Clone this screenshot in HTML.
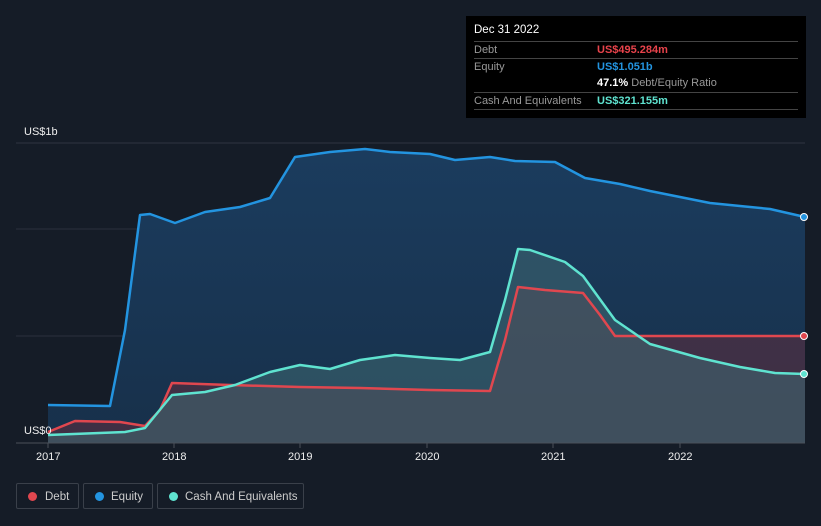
<!DOCTYPE html><html><head><style>
body{margin:0;width:821px;height:526px;background:#151c27;font-family:"Liberation Sans",sans-serif;overflow:hidden;position:relative}
.tt{position:absolute;left:466px;top:16px;width:340px;height:102px;background:#000;color:#fff;font-size:11px}
.row{position:absolute;left:8px;width:324px;border-top:1px solid #444;height:17px;line-height:17px}
.l{color:#999;position:absolute;left:0}.v{position:absolute;left:123px;font-weight:bold}
.lg{position:absolute;top:483px;height:26px;border:1px solid #3a404a;border-radius:2px;color:#ccc;font-size:11.5px;line-height:26px;box-sizing:border-box}
.lg i{position:absolute;left:11px;top:8px;width:9px;height:9px;border-radius:50%}
.ax{position:absolute;color:#eee;font-size:11px}
</style></head><body>
<svg width="821" height="526" style="position:absolute;left:0;top:0">
<defs><linearGradient id="g" x1="0" y1="0" x2="0" y2="1"><stop offset="0" stop-color="#1b3c5e"/><stop offset="1" stop-color="#17304a"/></linearGradient></defs>
<line x1="16" y1="143" x2="805" y2="143" stroke="#2e3540"/>
<line x1="16" y1="229" x2="805" y2="229" stroke="#2a313c"/>
<line x1="16" y1="336" x2="805" y2="336" stroke="#2a313c"/>
<polygon fill="url(#g)" points="48,443 48,405 110,406 125,330 140,215 150,214 175,223 205,212 240,207 270,198 295,157 330,152 365,149 390,152 430,154 455,160 490,157 515,161 555,162 585,178 620,184 650,191 680,197 710,203 740,206 770,209 805,217 805,443"/>
<polygon fill="#5a2f40" opacity="0.6" points="48,443 48,432 75,421 120,422 145,426 160,410 172,383 230,385 300,387 360,388 430,390 490,391 505,340 518,287 545,290 583,293 600,315 615,336 805,336 805,443"/>
<polygon fill="#3f6a72" opacity="0.55" points="48,443 48,435 125,432 145,428 172,395 205,392 235,385 270,372 300,365 330,369 360,360 395,355 430,358 460,360 490,352 505,300 518,249 530,250 565,262 583,276 615,320 650,344 700,358 740,367 775,373 805,374 805,443"/>
<polyline fill="none" stroke="#2394e0" stroke-width="2.5" stroke-linejoin="round" points="48,405 110,406 125,330 140,215 150,214 175,223 205,212 240,207 270,198 295,157 330,152 365,149 390,152 430,154 455,160 490,157 515,161 555,162 585,178 620,184 650,191 680,197 710,203 740,206 770,209 805,217"/>
<polyline fill="none" stroke="#e0474f" stroke-width="2.5" stroke-linejoin="round" points="48,432 75,421 120,422 145,426 160,410 172,383 230,385 300,387 360,388 430,390 490,391 505,340 518,287 545,290 583,293 600,315 615,336 805,336"/>
<polyline fill="none" stroke="#5fe3d0" stroke-width="2.5" stroke-linejoin="round" points="48,435 125,432 145,428 172,395 205,392 235,385 270,372 300,365 330,369 360,360 395,355 430,358 460,360 490,352 505,300 518,249 530,250 565,262 583,276 615,320 650,344 700,358 740,367 775,373 805,374"/>
<circle cx="804" cy="217" r="3.5" fill="#2394e0" stroke="#fff"/>
<circle cx="804" cy="336" r="3.5" fill="#e0474f" stroke="#fff"/>
<circle cx="804" cy="374" r="3.5" fill="#5fe3d0" stroke="#fff"/>
<line x1="16" y1="443" x2="805" y2="443" stroke="#4a505a"/>
<g stroke="#4a505a"><line x1="48" y1="443" x2="48" y2="448"/><line x1="174" y1="443" x2="174" y2="448"/><line x1="300" y1="443" x2="300" y2="448"/><line x1="427" y1="443" x2="427" y2="448"/><line x1="553" y1="443" x2="553" y2="448"/><line x1="680" y1="443" x2="680" y2="448"/></g>
</svg>
<div class="ax" style="left:24px;top:126px">US$1b</div>
<div class="ax" style="left:24px;top:425px">US$0</div>
<div class="ax" style="left:36px;top:451px">2017</div>
<div class="ax" style="left:162px;top:451px">2018</div>
<div class="ax" style="left:288px;top:451px">2019</div>
<div class="ax" style="left:415px;top:451px">2020</div>
<div class="ax" style="left:541px;top:451px">2021</div>
<div class="ax" style="left:668px;top:451px">2022</div>
<div class="tt">
<div style="position:absolute;left:8px;top:8px;font-size:11.5px">Dec 31 2022</div>
<div class="row" style="top:25px"><span class="l">Debt</span><span class="v" style="color:#e8434b">US$495.284m</span></div>
<div class="row" style="top:42px"><span class="l">Equity</span><span class="v" style="color:#2394e0">US$1.051b</span></div>
<div class="row" style="top:59px;border-top:none"><span class="v" style="color:#fff">47.1% <span style="color:#999;font-weight:normal">Debt/Equity Ratio</span></span></div>
<div class="row" style="top:76px"><span class="l">Cash And Equivalents</span><span class="v" style="color:#5fe3d0">US$321.155m</span></div>
<div class="row" style="top:93px;height:0"></div>
</div>
<div class="lg" style="left:16px;width:63px"><i style="background:#e0474f"></i><span style="position:absolute;left:28px">Debt</span></div>
<div class="lg" style="left:83px;width:70px"><i style="background:#2394e0"></i><span style="position:absolute;left:27px">Equity</span></div>
<div class="lg" style="left:157px;width:147px"><i style="background:#5fe3d0"></i><span style="position:absolute;left:27px">Cash And Equivalents</span></div>
</body></html>
